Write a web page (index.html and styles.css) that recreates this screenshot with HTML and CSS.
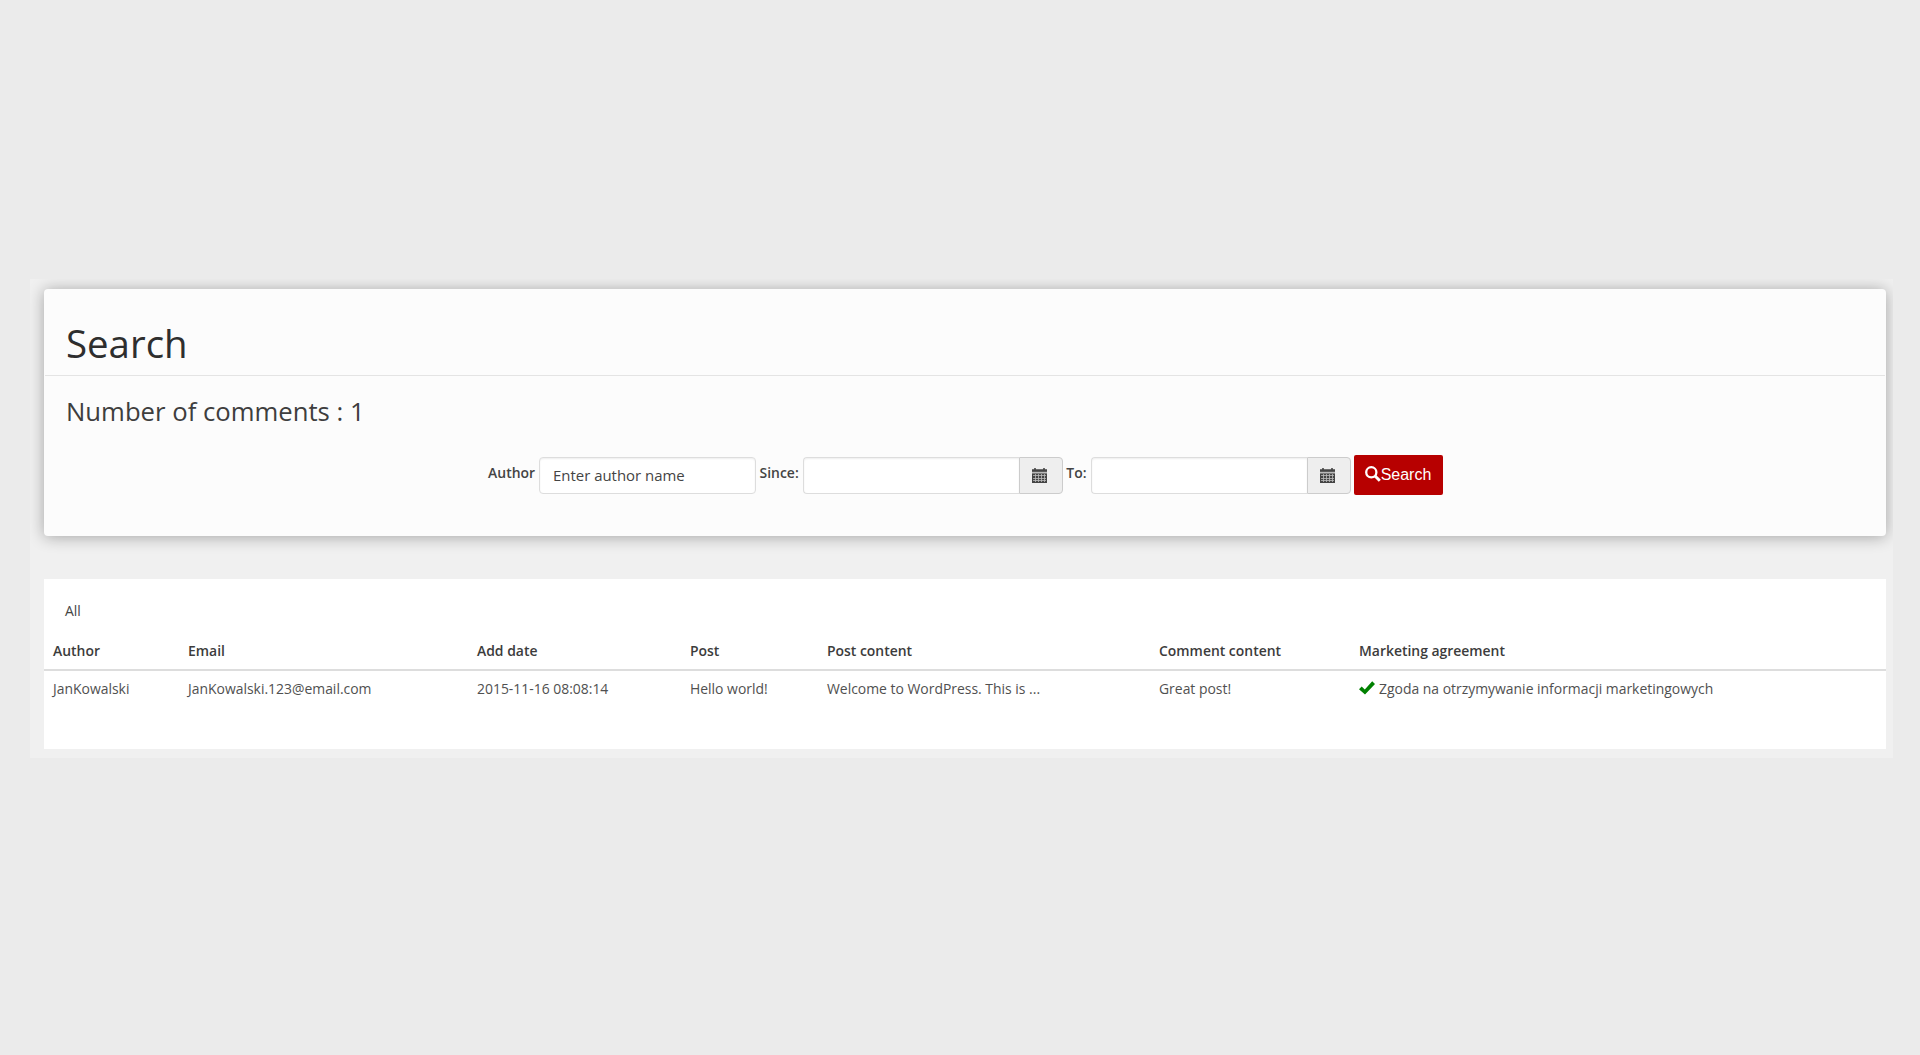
FILE: index.html
```html
<!DOCTYPE html>
<html lang="en">
<head>
	<meta charset="UTF-8">
	<title>Search</title>
	<link rel="stylesheet" href="styles.css">
</head>
<body>

	<!-- icons -->
	<svg class="sprite" width="0" height="0">
		<symbol id="icon_calendar" viewBox="0 0 15 15">
			<path d="M0 1.2h2.2V0h1.6v1.2h7.4V0h1.6v1.2H15V4H0zM0 5.2h15V15H0z"/>
			<path fill="#bbb" d="M0 3.8h15v1.4H0z"/>
			<path fill="none" stroke="#bbb" stroke-width=".8" d="M1 7.5h13M1 10.5h13M1 12.5h13M3.5 6v8M6.5 6v8M9.5 6v8M12.5 6v8"/>
		</symbol>
		<symbol id="icon_search" viewBox="0 0 16 16">
			<circle cx="6.3" cy="6.3" r="5.1" fill="none" stroke="#fff" stroke-width="2.3"/>
			<path stroke="#fff" stroke-width="3" d="M9.8 9.8l5 5"/>
		</symbol>
		<symbol id="icon_ok" viewBox="0 0 16 14">
			<path fill="green" d="M0 8.2l2.7-2.7 3.1 3L13.2.3 16 3 6 13.6z"/>
		</symbol>
	</svg>

	<div class="wrap">
		<div class="panel">
			<h1 class="panel-title">Search</h1>
			<h3 class="panel-count">Number of comments : 1</h3>
			<form class="search-form">
				<label for="author">Author</label>
				<input class="field" type="text" id="author" placeholder="Enter author name">
				<label for="since">Since:</label>
				<div class="group">
					<input class="field" type="text" id="since">
					<span class="addon"><svg><use href="#icon_calendar"/></svg></span>
				</div>
				<label for="to">To:</label>
				<div class="group">
					<input class="field" type="text" id="to">
					<span class="addon"><svg><use href="#icon_calendar"/></svg></span>
				</div>
				<button class="btn" type="button"><svg><use href="#icon_search"/></svg><span>Search</span></button>
			</form>
		</div>

		<div class="list">
			<div class="list-all">All</div>
			<table>
				<colgroup>
					<col class="c-author"><col class="c-email"><col class="c-date"><col class="c-post"><col class="c-content"><col class="c-comment"><col>
				</colgroup>
				<thead>
					<tr>
						<th>Author</th>
						<th>Email</th>
						<th>Add date</th>
						<th>Post</th>
						<th>Post content</th>
						<th>Comment content</th>
						<th>Marketing agreement</th>
					</tr>
				</thead>
				<tbody>
					<tr>
						<td>JanKowalski</td>
						<td>JanKowalski.123@email.com</td>
						<td>2015-11-16 08:08:14</td>
						<td>Hello world!</td>
						<td>Welcome to WordPress. This is ...</td>
						<td>Great post!</td>
						<td><svg class="ok"><use href="#icon_ok"/></svg>Zgoda na otrzymywanie informacji marketingowych</td>
					</tr>
				</tbody>
			</table>
		</div>
	</div>

</body>
</html>
```

FILE: styles.css
```css
*{margin: 0;padding: 0;box-sizing: border-box;}
body{height: 1055px;padding: 279px 27px 0 30px;background-color: #ebebeb;font: 13.93px/20px "Open Sans",sans-serif;color: #444;overflow: hidden;}
.sprite{display: none;}

.wrap{height: 479px;padding: 10px 7px 0 14px;background-color: #f0f0f0;overflow: hidden;}

.panel{height: 247px;background-color: #fcfcfc;border-radius: 4px;box-shadow: 0 1px 16px rgba(0,0,0,.32);}
.panel-title{height: 87px;margin: 0 1px;padding: 28px 21px 0;border-bottom: 1px solid #e4e4e4;font-size: 38.4px;line-height: 53px;font-weight: 400;color: #2e2e2e;}
.panel-count{padding: 18px 22px 0;font-size: 25.7px;line-height: 36px;font-weight: 400;color: #3e3e3e;}

.search-form{display: flex;justify-content: center;align-items: center;margin-top: 25px;padding-right: 3px;}
.search-form label{margin: 0 4px 5px 3.6px;font-weight: 600;}
.field{display: block;width: 217px;height: 37px;padding: 0 13px;background-color: #fff;border: 1px solid #ddd;border-radius: 4px;box-shadow: inset 0 1px 2px rgba(0,0,0,.07);font: 14.95px "Open Sans",sans-serif;color: #444;}
.field::placeholder{color: #444;}
.group{display: flex;}
.group .field{width: 216px;border-radius: 4px 0 0 4px;border-right: 0;}
.addon{display: flex;justify-content: center;align-items: center;width: 44px;height: 37px;background-color: #eee;border: 1px solid #ccc;border-radius: 0 4px 4px 0;}
.addon svg{width: 15px;height: 15px;margin-right: 2px;fill: #444;}
.btn{display: flex;align-items: center;justify-content: center;width: 89px;height: 40px;margin-left: 3px;background-color: #b70000;border: 0;border-radius: 2px;font: 16px "Liberation Sans",sans-serif;color: #fff;}
.btn svg{width: 16px;height: 16px;margin-bottom: 3px;}

.list{height: 170px;margin-top: 43px;padding-top: 22px;background-color: #fff;}
.list-all{padding-left: 21px;}
table{width: 100%;margin-top: 11px;table-layout: fixed;border-collapse: collapse;}
th,td{padding: 9px;text-align: left;white-space: nowrap;}
th{padding-bottom: 8px;font-weight: 600;border-bottom: 2px solid #ddd;color: #3c3c3c;}
td{padding-top: 8px;color: #505050;}
.c-author{width: 135px;}
.c-email{width: 289px;}
.c-date{width: 213px;}
.c-post{width: 137px;}
.c-content{width: 332px;}
.c-comment{width: 200px;}
.ok{width: 16px;height: 14px;margin-right: 4px;vertical-align: -1px;}
```
